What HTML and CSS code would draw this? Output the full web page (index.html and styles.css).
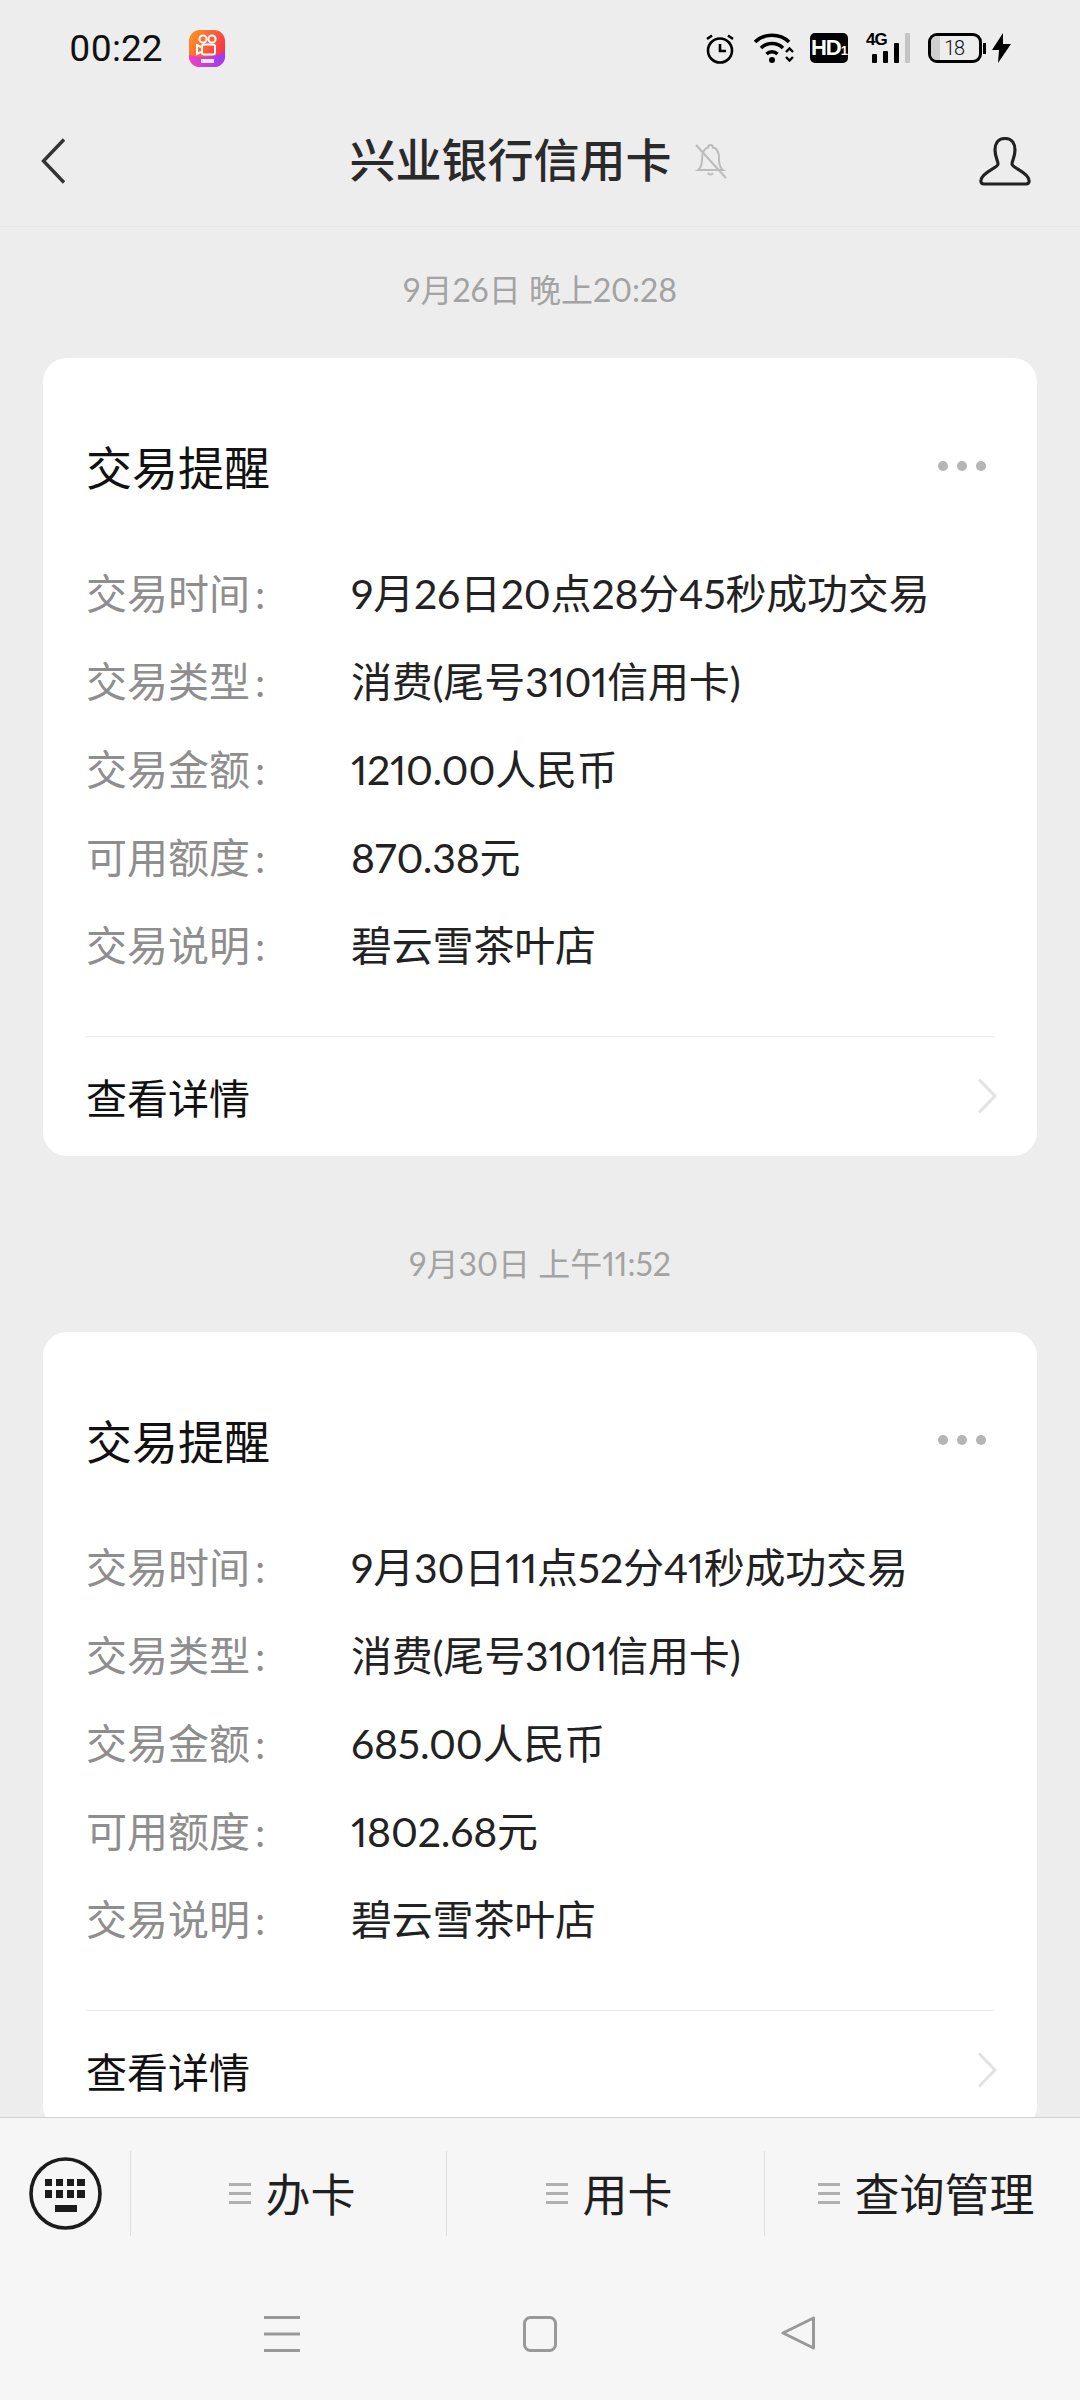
FILE: index.html
```html
<!DOCTYPE html>
<html lang="zh">
<head>
    <meta charset="utf-8">
    <title>兴业银行信用卡</title>
    <link rel="stylesheet" href="styles.css">
</head>
<body>
<div class="page">
    <header class="top">
        <div class="status">
            <div class="status-left">
                <span class="clock">00:22</span>
                <svg class="app-icon" viewBox="0 0 36 37">
                    <defs>
                        <linearGradient id="appTop" x1="0" y1="0" x2="1" y2="0.6">
                            <stop offset="0" stop-color="#fb9a1c"/>
                            <stop offset="1" stop-color="#f9304f"/>
                        </linearGradient>
                        <linearGradient id="appLow" x1="0" y1="0" x2="1" y2="0">
                            <stop offset="0" stop-color="#f23fc4"/>
                            <stop offset="1" stop-color="#9a3cf0"/>
                        </linearGradient>
                    </defs>
                    <rect width="36" height="37" rx="11" fill="url(#appTop)"/>
                    <path d="M0 25 C10 28 24 28 36 22 V26 C36 33 31 37 25 37 H11 C5 37 0 33 0 26 Z" fill="url(#appLow)"/>
                    <g fill="none" stroke="#fff" stroke-width="2">
                        <circle cx="14" cy="9" r="3.6"/>
                        <circle cx="23" cy="9" r="3.6"/>
                        <rect x="13" y="14.5" width="13" height="10" rx="2"/>
                        <path d="M12 17 L8 15 V24 L12 22"/>
                    </g>
                    <rect x="12" y="29" width="13" height="4" fill="#fff" opacity=".85"/>
                </svg>
            </div>
            <div class="status-right">
                <svg class="ic-alarm" viewBox="0 0 28 31" fill="none" stroke="#000">
                    <circle cx="14" cy="17.5" r="12" stroke-width="2.6"/>
                    <path d="M14 11 V18 H20" stroke-width="2.6"/>
                    <path d="M1 6 L6 2.5 M27 6 L22 2.5" stroke-width="2.6"/>
                </svg>
                <svg class="ic-wifi" viewBox="0 0 41 30" fill="none" stroke="#000">
                    <path d="M1 9 C10 0 26 0 35 9" stroke-width="3.6"/>
                    <path d="M7 15 C13 9 23 9 29 15" stroke-width="3.6"/>
                    <path d="M12.5 21 C15.5 18 20.5 18 23.5 21" stroke-width="3.4"/>
                    <circle cx="18" cy="27" r="3" fill="#000" stroke="none"/>
                    <path d="M32 19 L35.5 15.5 L39 19 M32 24 L35.5 27.5 L39 24" stroke-width="2.4"/>
                </svg>
                <span class="ic-hd">HD<small>1</small></span>
                <div class="ic-signal">
                    <span class="net">4G</span>
                    <i class="bar bar1"></i>
                    <i class="bar bar2"></i>
                    <i class="bar bar3"></i>
                    <i class="bar bar4"></i>
                </div>
                <div class="battery">
                    <span class="battery-body"><i class="battery-fill"></i><span class="battery-num">18</span></span>
                    <i class="battery-nub"></i>
                </div>
                <svg class="ic-bolt" viewBox="0 0 19 30"><path d="M11 0 L0 17 H7 L6 30 L19 11 H11 Z" fill="#000"/></svg>
            </div>
        </div>
        <nav class="nav">
            <svg class="nav-back" viewBox="0 0 24 46" fill="none" stroke="#333" stroke-width="3.4"><path d="M23 1.5 L2.5 23 L23 44.5"/></svg>
            <div class="nav-center">
                <span class="nav-title">兴业银行信用卡</span>
                <svg class="nav-bell" viewBox="0 0 33 36" fill="none" stroke="#bcbcbc" stroke-width="2">
                    <path d="M4 27 C7 25 8 22 8 16 C8 9 11 5 14 4.500 C14 1 19 1 19 4.500 C23 5 25 9 25 16 C25 22 26 25 29 27 Z"/>
                    <path d="M14 30 C15 32 18 32 19 30"/>
                    <path d="M2 2 L32 35"/>
                </svg>
            </div>
            <svg class="nav-user" viewBox="0 0 52 49" fill="none" stroke="#222" stroke-width="3.2">
                <path d="M26 1.500 C18 1.500 16 8 16 13 C16 20 19 24 19 27 C19 31 3 35 2 43 C1.500 46 3 47 5 47 H47 C49 47 50.500 46 50 43 C49 35 33 31 33 27 C33 24 36 20 36 13 C36 8 34 1.500 26 1.500 Z"/>
            </svg>
        </nav>
    </header>

    <main class="feed">
        <div class="stamp">9月26日 晚上20:28</div>
        <section class="card">
            <div class="card-head">
                <h2 class="card-title">交易提醒</h2>
                <div class="dots"><i></i><i></i><i></i></div>
            </div>
            <div class="rows">
                <div class="row"><span class="row-label">交易时间&thinsp;:</span><span class="row-value">9月26日20点28分45秒成功交易</span></div>
                <div class="row"><span class="row-label">交易类型&thinsp;:</span><span class="row-value">消费(尾号3101信用卡)</span></div>
                <div class="row"><span class="row-label">交易金额&thinsp;:</span><span class="row-value">1210.00人民币</span></div>
                <div class="row"><span class="row-label">可用额度&thinsp;:</span><span class="row-value">870.38元</span></div>
                <div class="row"><span class="row-label">交易说明&thinsp;:</span><span class="row-value">碧云雪茶叶店</span></div>
            </div>
            <div class="card-foot">
                <span>查看详情</span>
                <svg class="chevron" viewBox="0 0 20 36" fill="none" stroke="#e2e2e2" stroke-width="3"><path d="M2 1.500 L18 18 L2 34.500"/></svg>
            </div>
        </section>

        <div class="stamp stamp-next">9月30日 上午11:52</div>
        <section class="card">
            <div class="card-head">
                <h2 class="card-title">交易提醒</h2>
                <div class="dots"><i></i><i></i><i></i></div>
            </div>
            <div class="rows">
                <div class="row"><span class="row-label">交易时间&thinsp;:</span><span class="row-value">9月30日11点52分41秒成功交易</span></div>
                <div class="row"><span class="row-label">交易类型&thinsp;:</span><span class="row-value">消费(尾号3101信用卡)</span></div>
                <div class="row"><span class="row-label">交易金额&thinsp;:</span><span class="row-value">685.00人民币</span></div>
                <div class="row"><span class="row-label">可用额度&thinsp;:</span><span class="row-value">1802.68元</span></div>
                <div class="row"><span class="row-label">交易说明&thinsp;:</span><span class="row-value">碧云雪茶叶店</span></div>
            </div>
            <div class="card-foot">
                <span>查看详情</span>
                <svg class="chevron" viewBox="0 0 20 36" fill="none" stroke="#e2e2e2" stroke-width="3"><path d="M2 1.500 L18 18 L2 34.500"/></svg>
            </div>
        </section>
    </main>

    <footer class="bottom">
        <div class="tabs">
            <div class="tab-keyboard">
                <svg viewBox="0 0 73 73">
                    <circle cx="36.500" cy="36.500" r="34.500" fill="none" stroke="#1c1c1c" stroke-width="3.600"/>
                    <g fill="#1c1c1c">
                        <rect x="16" y="22" width="7" height="7"/><rect x="27" y="22" width="7" height="7"/>
                        <rect x="38" y="22" width="7" height="7"/><rect x="48" y="22" width="8" height="7"/>
                        <rect x="16" y="33" width="7" height="8"/><rect x="27" y="33" width="7" height="8"/>
                        <rect x="38" y="33" width="7" height="8"/><rect x="48" y="33" width="8" height="8"/>
                        <rect x="26" y="48" width="22" height="7"/>
                    </g>
                </svg>
            </div>
            <div class="tab tab-a"><span class="lines"><i></i><i></i><i></i></span>办卡</div>
            <div class="tab tab-b"><span class="lines"><i></i><i></i><i></i></span>用卡</div>
            <div class="tab tab-c"><span class="lines"><i></i><i></i><i></i></span>查询管理</div>
        </div>
        <div class="sysnav">
            <svg class="sys-menu" viewBox="0 0 36 36" stroke="#999" stroke-width="3"><path d="M0 1.500 H36 M0 18 H36 M0 34.500 H36"/></svg>
            <svg class="sys-home" viewBox="0 0 34 36" fill="none" stroke="#999" stroke-width="3"><rect x="1.500" y="1.500" width="31" height="33" rx="6"/></svg>
            <svg class="sys-back" viewBox="0 0 34 34" fill="none" stroke="#999" stroke-width="3" stroke-linejoin="round"><path d="M32.500 2 V32 L2 17 Z"/></svg>
        </div>
    </footer>
</div>
</body>
</html>
```

FILE: styles.css
```css
* {
    margin: 0;
    padding: 0;
    box-sizing: border-box;
}

body {
    background: #ededed;
    font-family: Lato, "Noto Sans CJK SC", sans-serif;
    font-feature-settings: "pnum";
    color: #1a1a1a;
}

.page {
    width: 1080px;
    height: 2400px;
    display: flex;
    flex-direction: column;
    overflow: hidden;
}

/* top */
.top {
    height: 227px;
    flex: none;
    border-bottom: 1px solid #e7e7e7;
}

.status {
    height: 96px;
    display: flex;
    align-items: center;
    justify-content: space-between;
    padding: 0 69px 0 69px;
}

.status-left {
    display: flex;
    align-items: center;
}

.clock {
    font-family: Roboto, sans-serif;
    font-size: 37px;
    color: #111;
    width: 120px;
}

.app-icon {
    width: 36px;
    height: 37px;
}

.status-right {
    display: flex;
    align-items: center;
}

.ic-alarm {
    width: 28px;
    height: 31px;
    margin-right: 20px;
}

.ic-wifi {
    width: 41px;
    height: 30px;
    margin-right: 15px;
}

.ic-hd {
    width: 38px;
    height: 30px;
    margin-right: 18px;
    background: #000;
    border-radius: 5px;
    color: #fff;
    font-family: "Liberation Sans", sans-serif;
    font-size: 22px;
    font-weight: 700;
    line-height: 30px;
    text-align: center;
    letter-spacing: -1px;
}

.ic-hd small {
    font-size: 13px;
}

.ic-signal {
    width: 44px;
    height: 30px;
    margin-right: 18px;
    display: flex;
    align-items: flex-end;
    justify-content: flex-end;
    gap: 6px;
    position: relative;
}

.net {
    position: absolute;
    left: 0;
    top: -3px;
    font-family: "Liberation Sans", sans-serif;
    font-size: 17px;
    font-weight: 700;
    letter-spacing: -1px;
    color: #000;
}

.bar {
    width: 5px;
    background: #000;
    border-radius: 1px;
}

.bar1 { height: 9px; }
.bar2 { height: 12px; }
.bar3 { height: 20px; }
.bar4 { height: 30px; background: #c4c4c4; }

.battery {
    display: flex;
    align-items: center;
    margin-right: 6px;
}

.battery-body {
    width: 54px;
    height: 30px;
    border: 3px solid #000;
    border-radius: 9px;
    display: flex;
    align-items: center;
    justify-content: center;
    position: relative;
    overflow: hidden;
}

.battery-fill {
    position: absolute;
    left: 0;
    top: 0;
    bottom: 0;
    width: 9px;
    background: #cfcfcf;
}

.battery-num {
    font-family: Roboto, sans-serif;
    font-size: 20px;
    font-weight: 300;
    color: #111;
    position: relative;
}

.battery-nub {
    width: 3px;
    height: 11px;
    margin-left: 1px;
    background: #000;
}

.ic-bolt {
    width: 19px;
    height: 30px;
}

.nav {
    height: 130px;
    display: grid;
    grid-template-columns: 1fr auto 1fr;
    align-items: center;
    padding: 0 49px 0 41px;
}

.nav-back {
    width: 24px;
    height: 46px;
}

.nav-center {
    display: flex;
    align-items: center;
    margin-left: 4px;
}

.nav-title {
    font-size: 46px;
    line-height: 60px;
    font-weight: 500;
    color: #2a2a2a;
    position: relative;
    top: -1px;
}

.nav-bell {
    width: 33px;
    height: 36px;
    margin-left: 22px;
}

.nav-user {
    width: 52px;
    height: 49px;
    justify-self: end;
}

/* feed */
.feed {
    flex: 1;
    min-height: 0;
    overflow: hidden;
    padding: 41px 43px 0 43px;
}

.stamp {
    height: 44px;
    line-height: 44px;
    margin-bottom: 46px;
    font-size: 32px;
    color: #a3a3a3;
    text-align: center;
}

.stamp-next {
    margin-top: 86px;
}

.card {
    background: #fff;
    border-radius: 24px;
    padding: 77px 43px 0 43px;
}

.card-head {
    display: flex;
    align-items: center;
    justify-content: space-between;
    height: 60px;
    margin-bottom: 52px;
}

.card-title {
    font-size: 46px;
    font-weight: 400;
    color: #111;
}

.dots {
    display: flex;
    gap: 9px;
    margin-right: 8px;
    margin-top: 2px;
}

.dots i {
    width: 10px;
    height: 10px;
    border-radius: 50%;
    background: #b5b5b5;
}

.row {
    height: 88px;
    display: flex;
    align-items: center;
    font-size: 41px;
}

.row-label {
    width: 265px;
    color: #8e8e8e;
}

.row-value {
    color: #222;
    letter-spacing: -0.2px;
}

.rows {
    padding-bottom: 49px;
    border-bottom: 1px solid #ececec;
}

.card-foot {
    height: 119px;
    padding-bottom: 2px;
    display: flex;
    align-items: center;
    justify-content: space-between;
    font-size: 41px;
    color: #111;
}

.chevron {
    width: 20px;
    height: 36px;
    margin-right: -3px;
}

/* bottom */
.bottom {
    height: 283px;
    flex: none;
    background: #f6f6f6;
    border-top: 1px solid #d2d2d2;
}

.tabs {
    height: 150px;
    display: grid;
    grid-template-columns: 130px 316px 318px 316px;
    align-items: center;
}

.tab-keyboard {
    display: flex;
    justify-content: flex-start;
    padding-left: 29px;
}

.tab-keyboard svg {
    width: 73px;
    height: 73px;
}

.tab {
    height: 85px;
    display: flex;
    align-items: center;
    justify-content: center;
    padding-left: 8px;
    padding-bottom: 2px;
    border-left: 1px solid #e0e0e0;
    font-size: 45px;
    color: #1f1f1f;
}

.lines {
    width: 22px;
    height: 21px;
    margin-right: 14px;
    margin-top: 2px;
    display: flex;
    flex-direction: column;
    justify-content: space-between;
}

.lines i {
    height: 3px;
    background: #b0b0b0;
}

.sysnav {
    height: 132px;
    display: flex;
    align-items: flex-start;
    padding: 48px 0 0 264px;
}

.sys-menu {
    width: 36px;
    height: 36px;
    margin-right: 223px;
}

.sys-home {
    width: 34px;
    height: 36px;
    margin-right: 224px;
}

.sys-back {
    width: 34px;
    height: 34px;
}
```
